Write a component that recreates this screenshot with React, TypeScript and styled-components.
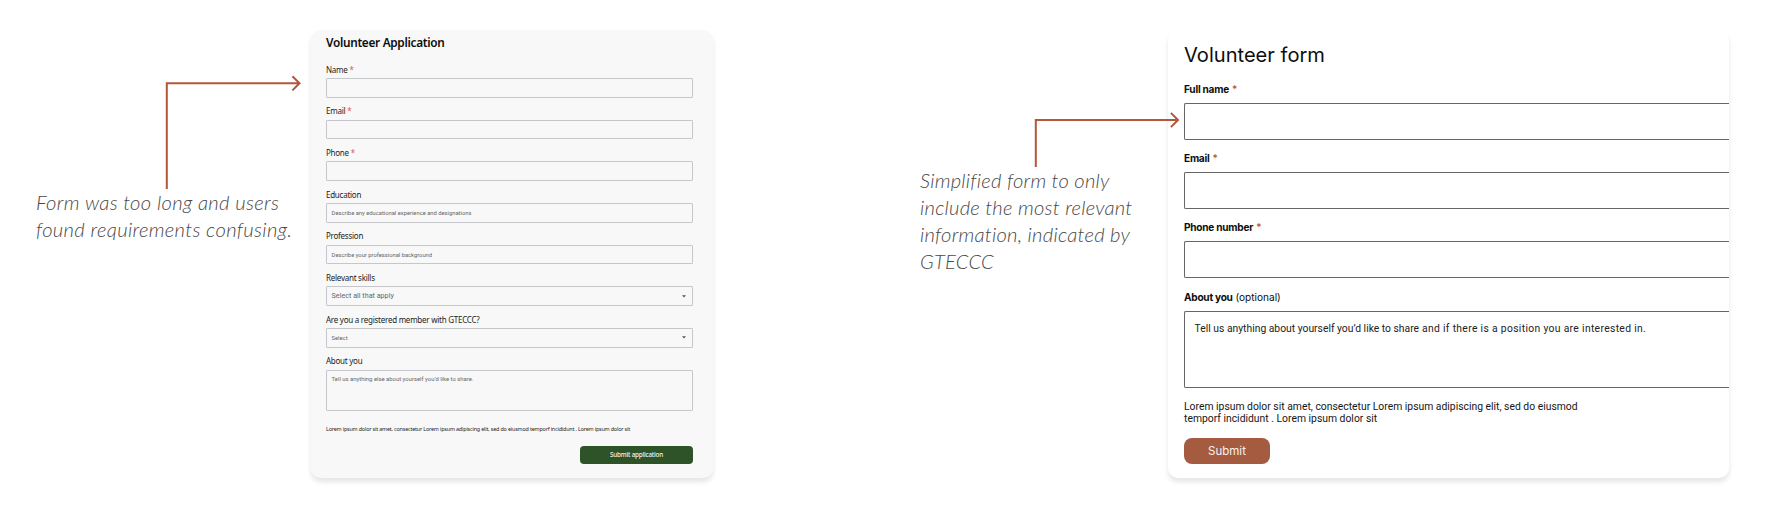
import React from 'react';
import styled, { createGlobalStyle } from 'styled-components';

const GlobalStyle = createGlobalStyle`
  * { box-sizing: border-box; }
  body { margin: 0; background: #fff; overflow: hidden; }
`;

const Page = styled.main`
  display: flex;
  align-items: flex-start;
  width: 1770px;
  height: 510px;
  padding-top: 30px;
`;

const Annotation = styled.aside<{ $width: number; $inset: number; $tracking: number }>`
  flex: none;
  width: ${p => p.$width}px;
  padding-left: ${p => p.$inset}px;
  font: italic 300 20.2px/27px Lato, sans-serif;
  letter-spacing: ${p => p.$tracking}px;
  color: #484848;
  white-space: nowrap;
  z-index: 1;
`;

const Arrow = styled.svg<{ $indent: number; $top: number; $gap: number }>`
  display: block;
  margin: ${p => p.$top}px 0 ${p => p.$gap}px ${p => p.$indent}px;
  overflow: visible;
  fill: none;
  stroke: #b5563a;
  stroke-width: 2;
`;

const NoteText = styled.p`
  margin: 0;
`;

const Card = styled.section<{ $width: number; $bg: string }>`
  flex: none;
  width: ${p => p.$width}px;
  height: 448px;
  background: ${p => p.$bg};
  border-radius: 10px;
  box-shadow: 0 4px 5px rgba(0, 0, 0, 0.1);
  overflow: hidden;
`;

const OldCard = styled(Card)`
  padding: 4px 20px 0 15px;
  font-family: 'Noto Sans', sans-serif;
  color: #1c1c1c;
`;

const OldTitle = styled.h2`
  margin: 0 0 12.5px;
  font-size: 11.8px;
  font-weight: 600;
  line-height: 17px;
  letter-spacing: -0.3px;
  color: #0c0c0c;
`;

const OldField = styled.div`
  height: 41.7px;
`;

const OldLabel = styled.label`
  display: block;
  height: 14.5px;
  font-size: 8px;
  line-height: 11.6px;
  letter-spacing: -0.25px;
`;

const OldRequired = styled.span`
  color: #e0574f;
`;

const OldBox = styled.div<{ $height?: number; $size?: number }>`
  display: flex;
  align-items: ${p => (p.$height ? 'flex-start' : 'center')};
  justify-content: space-between;
  width: 367px;
  height: ${p => p.$height ?? 19.7}px;
  padding: ${p => (p.$height ? '4px' : '0')} 6px 0 4.6px;
  border: 1px solid #c6c7cb;
  border-radius: 1px;
  font: 400 ${p => p.$size ?? 5.8}px/8px Roboto, sans-serif;
  color: #66666a;
`;

const Caret = styled.svg`
  fill: #55555a;
`;

const OldConsent = styled.p`
  margin: 14px 0 13.5px;
  font-size: 5.4px;
  line-height: 8px;
  letter-spacing: -0.17px;
  white-space: nowrap;
`;

const OldSubmit = styled.button`
  display: block;
  width: 113px;
  height: 18px;
  margin-left: auto;
  padding: 0;
  border: 0;
  border-radius: 4px;
  background: #2f5329;
  color: #f2f5f1;
  font: 500 6.3px/18px 'Noto Sans', sans-serif;
  letter-spacing: -0.2px;
`;

const NewCard = styled(Card)`
  padding: 12px 0 0 16px;
  font-family: Inter, sans-serif;
  color: #0d0d0d;
`;

const NewTitle = styled.h2`
  margin: 0 0 13px;
  font-size: 20.1px;
  font-weight: 400;
  line-height: 26px;
`;

const NewField = styled.div`
  height: 69.2px;
`;

const NewLabel = styled.label`
  display: block;
  height: 22px;
  font-size: 10.1px;
  font-weight: 650;
  line-height: 16.8px;
  letter-spacing: -0.24px;
`;

const NewRequired = styled.span`
  margin-left: 0.7px;
  color: #b5563a;
  font-weight: 500;
`;

const Optional = styled.span`
  margin-left: 0.6px;
  font-weight: 400;
  letter-spacing: 0;
`;

const NewBox = styled.div<{ $height?: number }>`
  width: 560px;
  height: ${p => p.$height ?? 36.5}px;
  padding: 10.4px 0 0 9.6px;
  border: 1px solid #67676a;
  border-right: 0;
  border-radius: 2px 0 0 2px;
  font: 400 10.34px/14px Roboto, sans-serif;
  color: #222;
  white-space: nowrap;
`;

const Spaced = styled.span`
  letter-spacing: 0.33px;
`;

const NewConsent = styled.p`
  width: 420px;
  margin: 13px 0 12.4px;
  font: 400 10.37px/12.4px Roboto, sans-serif;
  color: #161616;
`;

const NewSubmit = styled.button`
  display: block;
  width: 86px;
  height: 26px;
  padding: 0;
  border: 0;
  border-radius: 8px;
  background: #a55b40;
  color: #fbf3ef;
  font: 400 11.5px/26px Inter, sans-serif;
`;

type OldEntry = { label: string; required?: boolean; hint?: string; select?: boolean; size?: number };

const oldFields: OldEntry[] = [
  { label: 'Name', required: true },
  { label: 'Email', required: true },
  { label: 'Phone', required: true },
  { label: 'Education', hint: 'Describe any educational experience and designations' },
  { label: 'Profession', hint: 'Describe your professional background' },
  { label: 'Relevant skills', hint: 'Select all that apply', select: true, size: 7.2 },
  { label: 'Are you a registered member with GTECCC?', hint: 'Select', select: true },
];

const newFields = ['Full name', 'Email', 'Phone number'];

export default function App() {
  return (
    <>
      <GlobalStyle />
      <Page>
        <Annotation $width={311} $inset={36} $tracking={0.33}>
          <Arrow $indent={130} $top={45} $gap={0} width={136} height={114}>
            <path d="M.8 114V8.3H133M126.4 1.2L133.5 8.3L126.4 15.4" />
          </Arrow>
          <NoteText>
            Form was too long and users<br />found requirements confusing.
          </NoteText>
        </Annotation>

        <OldCard $width={402} $bg="#f8f8f8">
          <OldTitle>Volunteer Application</OldTitle>
          {oldFields.map(f => (
            <OldField key={f.label}>
              <OldLabel>
                {f.label}
                {f.required && <OldRequired> *</OldRequired>}
              </OldLabel>
              <OldBox $size={f.size}>
                {f.hint}
                {f.select && (
                  <Caret width={4} height={3} viewBox="0 0 4 3">
                    <path d="M0 .3H4L2 2.6Z" />
                  </Caret>
                )}
              </OldBox>
            </OldField>
          ))}
          <OldLabel>About you</OldLabel>
          <OldBox $height={41} $size={5.9}>
            Tell us anything else about yourself you’d like to share.
          </OldBox>
          <OldConsent>
            Lorem ipsum dolor sit amet, consectetur Lorem ipsum adipiscing elit, sed do eiusmod temporf
            incididunt . Lorem ipsum dolor sit
          </OldConsent>
          <OldSubmit type="button">Submit application</OldSubmit>
        </OldCard>

        <Annotation $width={455} $inset={207} $tracking={0.24}>
          <Arrow $indent={115} $top={82} $gap={-1} width={146} height={56}>
            <path d="M.8 55V8H142.5M135.9 .9L143 8L135.9 15.1" />
          </Arrow>
          <NoteText>
            Simplified form to only<br />include the most relevant<br />information, indicated by<br />GTECCC
          </NoteText>
        </Annotation>

        <NewCard $width={561} $bg="#fff">
          <NewTitle>Volunteer form</NewTitle>
          {newFields.map(label => (
            <NewField key={label}>
              <NewLabel>
                {label}
                <NewRequired> *</NewRequired>
              </NewLabel>
              <NewBox />
            </NewField>
          ))}
          <NewLabel>
            About you <Optional>(optional)</Optional>
          </NewLabel>
          <NewBox $height={77}>
            Tell us anything about yourself you’d like to share
            <Spaced> and if there is a position you are interested in.</Spaced>
          </NewBox>
          <NewConsent>
            Lorem ipsum dolor sit amet, consectetur Lorem ipsum adipiscing elit, sed do eiusmod<br />
            temporf incididunt . Lorem ipsum dolor sit
          </NewConsent>
          <NewSubmit type="button">Submit</NewSubmit>
        </NewCard>
      </Page>
    </>
  );
}
